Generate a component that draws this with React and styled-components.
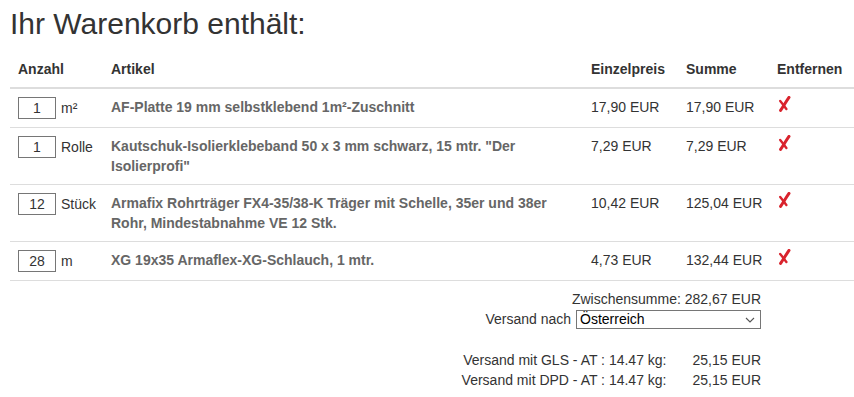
import styled, { createGlobalStyle } from "styled-components"

const GlobalStyle = createGlobalStyle`
    body {
        margin: 0;
        background: #fff;
        font-family: "Liberation Sans", Arial, sans-serif;
        font-size: 14px;
        line-height: 20px;
        color: #333;
    }
`

const Page = styled.div`
    padding: 0 0 0 10px;
`

const Title = styled.h2`
    font-size: 30px;
    font-weight: 400;
    line-height: 33px;
    margin: 7px 0 11px;
    color: #333;
`

const Table = styled.table`
    width: 844px;
    border-collapse: collapse;
    table-layout: fixed;
`

const Col = styled.col`
    width: ${(p) => p.$w}px;
`

const Th = styled.th`
    text-align: left;
    font-weight: 700;
    padding: 8px;
    border-bottom: 2px solid #ddd;
    vertical-align: bottom;
    white-space: nowrap;
`

const Td = styled.td`
    padding: 8px;
    border-top: 1px solid #ddd;
    border-bottom: 1px solid #ddd;
    vertical-align: top;
    white-space: ${(p) => (p.$wrap ? "normal" : "nowrap")};
`

const QtyCell = styled.div`
    display: flex;
    align-items: center;
    gap: 5px;
    height: 22px;
`

const QtyInput = styled.input`
    box-sizing: border-box;
    width: 38px;
    height: 22px;
    margin: 0;
    padding: 0 2px;
    border: 1px solid #767676;
    font-family: inherit;
    font-size: 14px;
    color: #333;
    text-align: center;
`

const Article = styled.span`
    font-weight: 700;
    color: #666;
`

const Remove = styled.span`
    display: inline-block;
    width: 14px;
    height: 16px;
    margin-top: -1px;
    cursor: pointer;
    svg {
        display: block;
    }
`

const Summary = styled.div`
    display: flex;
    flex-direction: column;
    align-items: flex-end;
    padding: 8px 93px 0 0;
`

const Line = styled.div`
    display: flex;
    align-items: center;
    gap: 5px;
    height: 20px;
`

const SelectWrap = styled.span`
    position: relative;
    display: inline-block;
    height: 19px;
    svg {
        position: absolute;
        right: 6px;
        top: 7px;
        pointer-events: none;
    }
`

const CountrySelect = styled.select`
    box-sizing: border-box;
    display: block;
    width: 185px;
    height: 19px;
    margin: 0;
    padding: 0 0 0 3px;
    border: 1px solid #767676;
    border-radius: 0;
    appearance: none;
    background: #fff;
    font-family: inherit;
    font-size: 14px;
    line-height: 17px;
    color: #000;
    outline: none;
`

const Shipping = styled.div`
    display: grid;
    grid-template-columns: auto auto;
    column-gap: 26px;
    margin-top: 21px;
    text-align: right;
    white-space: nowrap;
`

const rows = [
    { qty: 1, unit: "m²", name: "AF-Platte 19 mm selbstklebend 1m²-Zuschnitt", price: "17,90 EUR", sum: "17,90 EUR" },
    { qty: 1, unit: "Rolle", name: 'Kautschuk-Isolierklebeband 50 x 3 mm schwarz, 15 mtr. "Der Isolierprofi"', price: "7,29 EUR", sum: "7,29 EUR" },
    { qty: 12, unit: "Stück", name: "Armafix Rohrträger FX4-35/38-K Träger mit Schelle, 35er und 38er Rohr, Mindestabnahme VE 12 Stk.", price: "10,42 EUR", sum: "125,04 EUR" },
    { qty: 28, unit: "m", name: "XG 19x35 Armaflex-XG-Schlauch, 1 mtr.", price: "4,73 EUR", sum: "132,44 EUR" },
]

const Cross = () => (
    <svg width="14" height="16" viewBox="0 0 14 16">
        <path d="M12 1.4 C9.6 4.8 7 9.4 3.6 14.4" stroke="#d9232d" strokeWidth="3" fill="none" strokeLinecap="round" />
        <path d="M3.2 5 C5.2 7.4 6.8 9.6 9.4 13" stroke="#d9232d" strokeWidth="2.4" fill="none" strokeLinecap="round" />
    </svg>
)

const Chevron = () => (
    <svg width="10" height="6" viewBox="0 0 10 6">
        <path d="M1 1 L5 5 L9 1" stroke="#555" strokeWidth="1.1" fill="none" />
    </svg>
)

const App = () => {
    return (
        <Page>
            <GlobalStyle />
            <Title>Ihr Warenkorb enthält:</Title>
            <Table>
                <colgroup>
                    <Col $w={93} />
                    <Col $w={480} />
                    <Col $w={95} />
                    <Col $w={91} />
                    <Col $w={85} />
                </colgroup>
                <thead>
                    <tr>
                        <Th>Anzahl</Th>
                        <Th>Artikel</Th>
                        <Th>Einzelpreis</Th>
                        <Th>Summe</Th>
                        <Th>Entfernen</Th>
                    </tr>
                </thead>
                <tbody>
                    {rows.map((r) => (
                        <tr key={r.name}>
                            <Td>
                                <QtyCell>
                                    <QtyInput defaultValue={r.qty} />
                                    <span>{r.unit}</span>
                                </QtyCell>
                            </Td>
                            <Td $wrap>
                                <Article>{r.name}</Article>
                            </Td>
                            <Td>{r.price}</Td>
                            <Td>{r.sum}</Td>
                            <Td>
                                <Remove title="Entfernen">
                                    <Cross />
                                </Remove>
                            </Td>
                        </tr>
                    ))}
                </tbody>
            </Table>
            <Summary>
                <Line>Zwischensumme: 282,67 EUR</Line>
                <Line>
                    Versand nach
                    <SelectWrap>
                        <CountrySelect defaultValue="AT">
                            <option value="AT">Österreich</option>
                            <option value="DE">Deutschland</option>
                        </CountrySelect>
                        <Chevron />
                    </SelectWrap>
                </Line>
                <Shipping>
                    <span>Versand mit GLS - AT : 14.47 kg:</span>
                    <span>25,15 EUR</span>
                    <span>Versand mit DPD - AT : 14.47 kg:</span>
                    <span>25,15 EUR</span>
                </Shipping>
            </Summary>
        </Page>
    )
}

export default App
